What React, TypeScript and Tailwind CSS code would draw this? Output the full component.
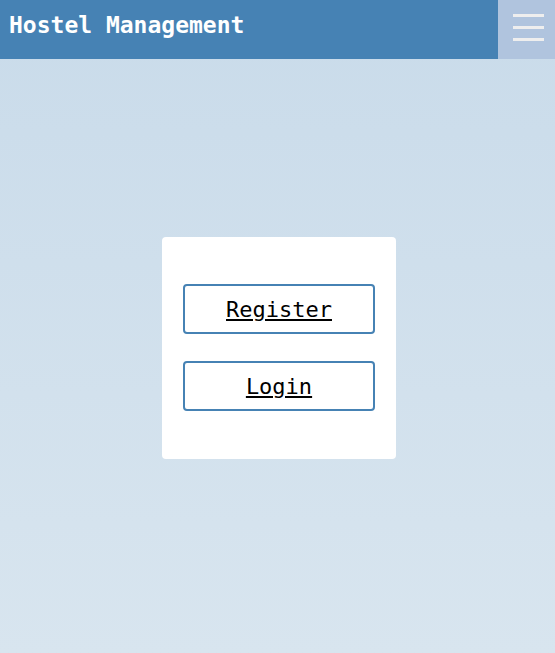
export default function App() {
  return (
    <div
      className="min-h-[653px] flex flex-col bg-gradient-to-b from-[#c9dbea] to-[#d8e5ef]"
      style={{ fontFamily: '"DejaVu Sans Mono", monospace' }}
    >
      <header className="h-[59px] flex items-stretch bg-[#4682b4]">
        <h1 className="flex-1 pl-[9px] pt-[10px] text-[23px] font-bold text-white leading-[30px]">
          Hostel Management
        </h1>
        <button className="w-[57px] bg-[#b0c4de] flex flex-col items-center justify-center gap-[9px] pl-[3px] pb-[5px]">
          <span className="block w-[31px] h-[3px] bg-[#eeeeee]" />
          <span className="block w-[31px] h-[3px] bg-[#eeeeee]" />
          <span className="block w-[31px] h-[3px] bg-[#eeeeee]" />
        </button>
      </header>
      <main className="flex-1 flex items-center justify-center pb-[16px] pl-[3px]">
        <div className="w-[234px] bg-white rounded-[4px] px-[21px] pt-[47px] pb-[48px] flex flex-col gap-[27px]">
          <a
            href="#"
            className="h-[50px] flex items-center justify-center border-2 border-[#4682b4] rounded-[4px] text-[22px] text-black underline"
          >
            Register
          </a>
          <a
            href="#"
            className="h-[50px] flex items-center justify-center border-2 border-[#4682b4] rounded-[4px] text-[22px] text-black underline"
          >
            Login
          </a>
        </div>
      </main>
    </div>
  );
}
